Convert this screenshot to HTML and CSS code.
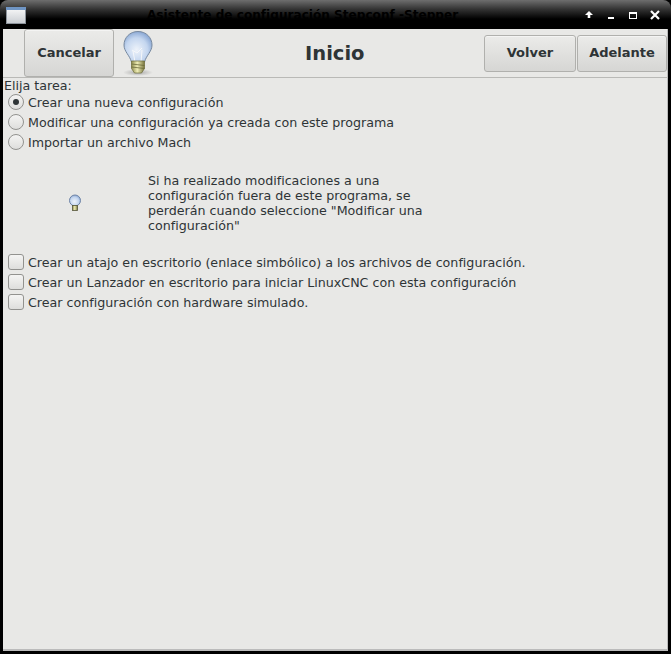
FILE: index.html
```html
<!DOCTYPE html>
<html lang="es">
<head>
<meta charset="utf-8">
<title>Asistente de configuración Stepconf -Stepper</title>
<link rel="stylesheet" href="styles.css">
</head>
<body>
<div class="window">
  <header class="titlebar">
    <svg class="win-icon" width="20" height="17" viewBox="0 0 20 17">
      <defs><linearGradient id="wi" x1="0" y1="0" x2="0" y2="1"><stop offset="0" stop-color="#fafafa"/><stop offset="1" stop-color="#c9cdd2"/></linearGradient></defs>
      <rect x="0.5" y="0.5" width="19" height="16" fill="url(#wi)" stroke="#8d949c"/>
      <rect x="0" y="0" width="20" height="3" fill="#6f95c4"/>
    </svg>
    <div class="win-title">Asistente de configuración Stepconf -Stepper</div>
    <div class="win-controls">
      <svg width="12" height="12" viewBox="0 0 12 12"><path d="M6 2 L10 6 H7.3 V9 H4.7 V6 H2 Z" fill="#fff"/></svg>
      <svg width="12" height="12" viewBox="0 0 12 12"><rect x="3" y="8" width="6" height="2" fill="#fff"/></svg>
      <svg width="12" height="12" viewBox="0 0 12 12"><rect x="2.5" y="3.5" width="7" height="6" fill="none" stroke="#fff" stroke-width="1"/><rect x="2" y="3" width="8" height="2" fill="#fff"/></svg>
      <svg width="12" height="12" viewBox="0 0 12 12"><path d="M2 2 L10 10 M10 2 L2 10" stroke="#fff" stroke-width="2.2"/></svg>
    </div>
  </header>
  <main class="content">
    <div class="toolbar">
      <button class="btn btn-cancel" type="button">Cancelar</button>
      <svg class="bulb-big" width="38" height="48" viewBox="0 0 38 48">
        <defs>
          <radialGradient id="glass" cx="0.45" cy="0.6" r="0.65"><stop offset="0" stop-color="#eef3fa"/><stop offset="0.6" stop-color="#c4d6ef"/><stop offset="1" stop-color="#7f9fcf"/></radialGradient>
          <linearGradient id="base" x1="0" y1="0" x2="1" y2="0"><stop offset="0" stop-color="#8f8d4e"/><stop offset="0.45" stop-color="#eeecb5"/><stop offset="1" stop-color="#77753e"/></linearGradient>
          <radialGradient id="shadow"><stop offset="0" stop-color="#888" stop-opacity=".65"/><stop offset="1" stop-color="#888" stop-opacity="0"/></radialGradient>
        </defs>
        <ellipse cx="19" cy="43.5" rx="15" ry="3.5" fill="url(#shadow)"/>
        <path d="M19 2.5 C10.5 2.5 5 9 5 16 C5 22.5 10.5 26 12.5 33 H25.5 C27.5 26 33 22.5 33 16 C33 9 27.5 2.5 19 2.5 Z" fill="url(#glass)" stroke="#76889f" stroke-width="1"/>
        <path d="M13 21 L18 24 L23 19 M16 33 L14 22 M22 33 L23 21" fill="none" stroke="#f5f7fa" stroke-width="1"/>
        <path d="M12.5 32 H25.5 V39.5 L22.5 44 H15.5 L12.5 39.5 Z" fill="url(#base)" stroke="#6b6a3a" stroke-width=".7"/>
        <path d="M12.5 35 L25.5 36.5 M12.5 38 L25.5 39.5" stroke="#6b6a3a" stroke-width=".8"/>
      </svg>
      <h1 class="heading">Inicio</h1>
      <div class="nav-buttons">
        <button class="btn btn-back" type="button">Volver</button>
        <button class="btn btn-next" type="button">Adelante</button>
      </div>
    </div>
    <div class="body">
      <div class="label">Elija tarea:</div>
      <div class="options">
        <div class="option"><span class="radio checked"></span>Crear una nueva configuración</div>
        <div class="option"><span class="radio"></span>Modificar una configuración ya creada con este programa</div>
        <div class="option"><span class="radio"></span>Importar un archivo Mach</div>
      </div>
      <div class="notice">
        <div class="notice-icon">
          <svg width="16" height="18" viewBox="0 0 16 18">
            <circle cx="8" cy="6.5" r="5.5" fill="url(#glass)" stroke="#6f84a6"/>
            <rect x="5.5" y="11.5" width="5" height="5" fill="url(#base)" stroke="#55553a" stroke-width=".8"/>
          </svg>
        </div>
        <p class="notice-text">Si ha realizado modificaciones a una configuración fuera de este programa, se perderán cuando seleccione "Modificar una configuración"</p>
      </div>
      <div class="options checks">
        <div class="option"><span class="check"></span>Crear un atajo en escritorio (enlace simbólico) a los archivos de configuración.</div>
        <div class="option"><span class="check"></span>Crear un Lanzador en escritorio para iniciar LinuxCNC con esta configuración</div>
        <div class="option"><span class="check"></span>Crear configuración con hardware simulado.</div>
      </div>
    </div>
  </main>
</div>
</body>
</html>
```
FILE: styles.css
```css
* { box-sizing: border-box; }
html, body { margin: 0; padding: 0; height: 100%; background: #000; }
body { font-family: "DejaVu Sans", sans-serif; font-size: 12.67px; color: #2e3436; overflow: hidden; }
.window { width: 671px; height: 654px; display: flex; flex-direction: column; background: #000; border-radius: 8px 8px 0 0; overflow: hidden; }
.titlebar { height: 29px; flex: none; display: flex; align-items: flex-start; background: linear-gradient(#6e6e6e 0, #343434 9px, #000 19px, #000 100%); position: relative; }
.win-icon { margin: 7px 0 0 6px; flex: none; }
.win-title { position: absolute; left: 147px; top: 8px; font-weight: bold; font-size: 12.1px; color: #000; white-space: nowrap; }
.win-controls { margin-left: auto; display: flex; gap: 10px; padding: 9px 10px 0 0; }
.content { flex: 1; margin: 0 3px 3px; background: #e8e8e6; display: flex; flex-direction: column; border-right: 1px solid #bbb; border-bottom: 2px solid #bbb; }
.toolbar { height: 49px; flex: none; display: flex; align-items: center; border-bottom: 1px solid #b9b9b6; padding-left: 21px; position: relative; }
.btn { font-family: inherit; font-size: 13px; font-weight: bold; color: #2e3436; background: linear-gradient(#ebebe9, #d6d6d4); border: 1px solid #b0b0ad; border-radius: 3px; padding: 0 0 2px; box-shadow: inset 0 1px 0 #f4f4f3; }
.btn-cancel { width: 90px; height: 48px; align-self: flex-start; }
.bulb-big { margin: 0 0 0 5px; flex: none; align-self: flex-start; }
.heading { position: absolute; left: 302px; top: 13px; margin: 0; font-size: 19.5px; line-height: 24px; font-weight: bold; }
.nav-buttons { margin-left: auto; display: flex; gap: 1px; }
.btn-back { width: 92px; height: 37px; }
.btn-next { width: 90px; height: 37px; }
.body { padding: 0 0 0 1px; flex: 1; }
.label { height: 14px; line-height: 15px; }
.options { display: flex; flex-direction: column; padding-left: 4px; }
.option { height: 20px; display: flex; align-items: center; gap: 4px; white-space: nowrap; }
.radio { width: 16px; height: 16px; border-radius: 50%; border: 1px solid #92928f; background: linear-gradient(#f4f4f3, #dededc); flex: none; position: relative; }
.radio.checked::after { content: ""; position: absolute; left: 4px; top: 4px; width: 6px; height: 6px; border-radius: 50%; background: #2e3436; }
.check { width: 16px; height: 16px; border-radius: 3px; border: 1px solid #92928f; background: linear-gradient(#f4f4f3, #dededc); flex: none; }
.notice { display: flex; height: 99px; }
.notice-icon { width: 142px; flex: none; display: flex; justify-content: center; padding-top: 42px; }
.notice-text { margin: 21px 0 0 2px; width: 290px; line-height: 15px; }
.checks { margin-top: 1px; }
```
